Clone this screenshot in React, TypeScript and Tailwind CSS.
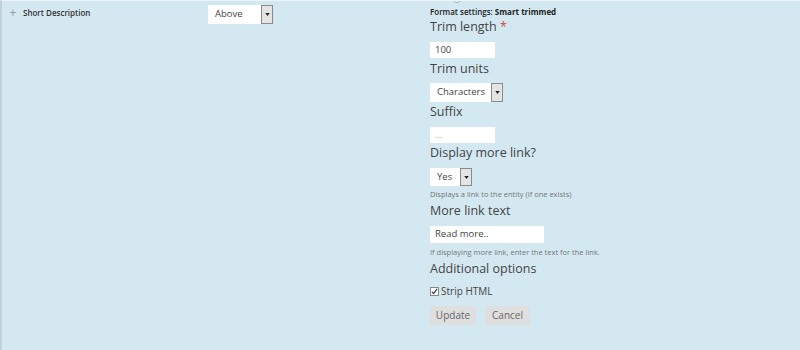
import type { ReactNode } from "react";

const font = { fontFamily: '"Open Sans", "Noto Sans", sans-serif' };

export default function App() {
  return (
    <div className="h-[350px] w-[800px] overflow-hidden border-l-2 border-t border-l-[#c2d0d6] border-t-[#eef5f8] bg-[#d4e8f1] text-[#333]" style={font}>
      <div className="flex">
        <div className="flex w-[206px] items-start pl-[5px] pt-[5px]">
          <span className="mt-[1px] w-[12px] text-center text-[12px] leading-[12px] text-[#999]">+</span>
          <span className="ml-[4px] text-[8px] font-semibold leading-[14px] text-[#333]">Short Description</span>
        </div>
        <div className="w-[222px] pt-[4px]">
          <Select value="Above" width={53} height={19} />
        </div>
        <div className="relative flex flex-col pt-[5px]">
          <div className="absolute left-[22px] top-[-8px] h-[10px] w-[10px] rounded-full border border-[#9bb8c8] bg-[#e7f2f7]" />
          <div className="h-[11px] text-[8px] leading-[12px] text-[#222]">
            <span className="font-semibold">Format settings:</span> <span className="font-bold">Smart trimmed</span>
          </div>
          <Label>
            Trim length <span className="text-[#e0454a]">*</span>
          </Label>
          <Input value="100" width={65} height={16} className="mt-[5px]" />
          <Label className="mt-[1px]">Trim units</Label>
          <div className="mt-[4px]">
            <Select value="Characters" width={61} height={19} />
          </div>
          <Label>Suffix</Label>
          <Input value="..." width={65} height={16} className="mt-[5px] text-[#aaa]" />
          <Label>Display more link?</Label>
          <div className="mt-[5px]">
            <Select value="Yes" width={30} height={18} />
          </div>
          <Help className="mt-[2px]">Displays a link to the entity (if one exists)</Help>
          <Label className="mt-[1px]">More link text</Label>
          <Input value="Read more.." width={114} height={17} className="mt-[5px]" />
          <Help className="mt-[3px]">If displaying more link, enter the text for the link.</Help>
          <Label className="mt-[1px]">Additional options</Label>
          <label className="mt-[5px] flex h-[14px] items-center gap-[2px] text-[10px] text-[#444]">
            <span className="flex h-[9px] w-[9px] items-center justify-center border border-[#888] bg-white">
              <svg viewBox="0 0 8 8" className="h-[7px] w-[7px]">
                <path d="M1 4.2 L3 6.5 L7 1" fill="none" stroke="#335" strokeWidth="1.3" />
              </svg>
            </span>
            Strip HTML
          </label>
          <div className="mt-[8px] flex gap-[9px]">
            <button type="button" className="h-[19px] w-[46px] rounded-[2px] bg-[#dfdfdf] text-[10px] text-[#666]">Update</button>
            <button type="button" className="h-[19px] w-[45px] rounded-[2px] bg-[#dfdfdf] text-[10px] text-[#666]">Cancel</button>
          </div>
        </div>
      </div>
    </div>
  );
}

function Label({ children, className = "" }: { children: ReactNode; className?: string }) {
  return <div className={`h-[20px] text-[12.5px] leading-[20px] text-[#444] ${className}`}>{children}</div>;
}

function Help({ children, className = "" }: { children: ReactNode; className?: string }) {
  return <div className={`h-[12px] text-[7.5px] leading-[12px] text-[#777] ${className}`}>{children}</div>;
}

function Input({ value, width, height, className = "" }: { value: string; width: number; height: number; className?: string }) {
  return (
    <div className={`flex items-center bg-white pl-[5px] text-[9.5px] text-[#444] ${className}`} style={{ width, height }}>
      {value}
    </div>
  );
}

function Select({ value, width, height }: { value: string; width: number; height: number }) {
  return (
    <div className="flex" style={{ height }}>
      <div className="flex items-center bg-white pl-[7px] text-[9.5px] text-[#444]" style={{ width }}>{value}</div>
      <div className="flex w-[12px] items-center justify-center border border-[#8a8a8a] bg-[#e4e4e4]">
        <svg viewBox="0 0 6 4" className="h-[3px] w-[5px]">
          <path d="M0 0 H6 L3 4 Z" fill="#222" />
        </svg>
      </div>
    </div>
  );
}
